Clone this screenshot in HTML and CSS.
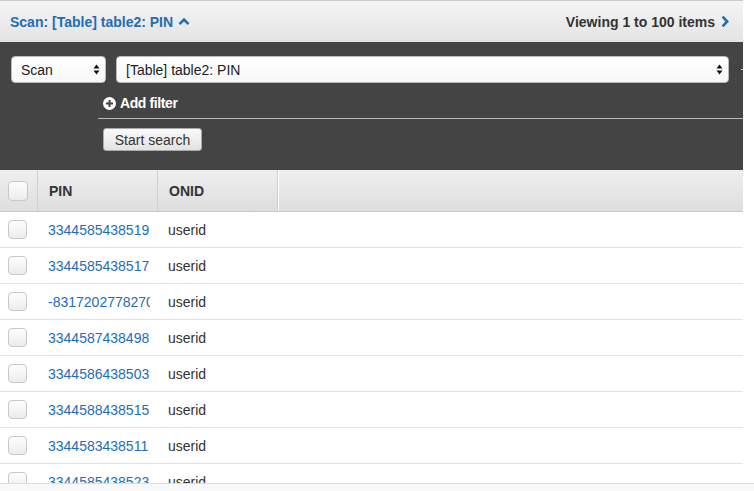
FILE: index.html
```html
<!DOCTYPE html>
<html>
<head>
<meta charset="utf-8">
<link rel="stylesheet" href="styles.css">
</head>
<body>
<div class="page">
  <div class="topbar">
    <a class="title">Scan: [Table] table2: PIN
      <svg class="chev-up" width="12" height="9" viewBox="0 0 12 9"><path d="M1.5 7.2 L6 2.7 L10.5 7.2" fill="none" stroke="#1f6db5" stroke-width="2.6"/></svg>
    </a>
    <div class="viewing">Viewing 1 to 100 items
      <svg class="chev-right" width="8" height="13" viewBox="0 0 8 13"><path d="M1.6 1.6 L6.2 6.5 L1.6 11.4" fill="none" stroke="#1f6db5" stroke-width="2.6"/></svg>
    </div>
  </div>

  <div class="panel">
    <div class="selects">
      <div class="select select-scan"><span>Scan</span><span class="arrows"><svg width="7" height="11" viewBox="0 0 7 11"><path d="M3.5 0.5 L6.5 4.5 L0.5 4.5 Z M3.5 10.5 L6.5 6.5 L0.5 6.5 Z" fill="#111"/></svg></span></div>
      <div class="select select-table"><span>[Table] table2: PIN</span><span class="arrows"><svg width="7" height="11" viewBox="0 0 7 11"><path d="M3.5 0.5 L6.5 4.5 L0.5 4.5 Z M3.5 10.5 L6.5 6.5 L0.5 6.5 Z" fill="#111"/></svg></span></div>
      <span class="tick"></span>
    </div>
    <div class="filter">
      <div class="add-filter">
        <svg width="13" height="13" viewBox="0 0 13 13"><circle cx="6.5" cy="6.5" r="6.5" fill="#fff"/><path d="M6.5 3 V10 M3 6.5 H10" stroke="#444" stroke-width="2"/></svg>
        <span>Add filter</span>
      </div>
    </div>
    <div class="actions">
      <button class="btn">Start search</button>
    </div>
  </div>

  <div class="table">
    <div class="thead">
      <div class="th th-check"><span class="cb"></span></div>
      <div class="th">PIN</div>
      <div class="th">ONID</div>
      <div class="th th-rest"></div>
    </div>
    <div class="row"><div class="td td-check"><span class="cb"></span></div><div class="td pin">3344585438519</div><div class="td onid">userid</div><div class="td"></div></div>
    <div class="row"><div class="td td-check"><span class="cb"></span></div><div class="td pin">3344585438517</div><div class="td onid">userid</div><div class="td"></div></div>
    <div class="row"><div class="td td-check"><span class="cb"></span></div><div class="td pin">-8317202778270</div><div class="td onid">userid</div><div class="td"></div></div>
    <div class="row"><div class="td td-check"><span class="cb"></span></div><div class="td pin">3344587438498</div><div class="td onid">userid</div><div class="td"></div></div>
    <div class="row"><div class="td td-check"><span class="cb"></span></div><div class="td pin">3344586438503</div><div class="td onid">userid</div><div class="td"></div></div>
    <div class="row"><div class="td td-check"><span class="cb"></span></div><div class="td pin">3344588438515</div><div class="td onid">userid</div><div class="td"></div></div>
    <div class="row"><div class="td td-check"><span class="cb"></span></div><div class="td pin">3344583438511</div><div class="td onid">userid</div><div class="td"></div></div>
    <div class="row"><div class="td td-check"><span class="cb"></span></div><div class="td pin">3344585438523</div><div class="td onid">userid</div><div class="td"></div></div>
  </div>
</div>
<div class="bottom-bar"></div>
</body>
</html>
```

FILE: styles.css
```css
* { box-sizing: border-box; }
html, body { margin: 0; padding: 0; background: #fff; overflow: hidden; }
body {
  font-family: "Liberation Sans", Arial, Helvetica, sans-serif;
  height: 491px;
}
.page { width: 743px; }

.topbar {
  height: 42px;
  border-top: 1px solid #c9c9c9;
  background: linear-gradient(#f5f5f5, #e3e3e3);
  display: flex;
  align-items: center;
  justify-content: space-between;
  padding: 0 14px 0 10px;
}
.title {
  color: #1f6db5;
  font-weight: bold;
  font-size: 14px;
  display: flex;
  align-items: center;
  gap: 5px;
}
.viewing {
  color: #333;
  font-weight: bold;
  font-size: 14px;
  display: flex;
  align-items: center;
  gap: 6px;
}

.panel {
  background: #444;
  height: 128px;
  padding-top: 14px;
}
.selects {
  display: flex;
  align-items: center;
  height: 27px;
}
.select {
  height: 27px;
  background: linear-gradient(#fff, #f7f7f7);
  border-radius: 4px;
  border: 1px solid #bbb;
  display: flex;
  align-items: center;
  justify-content: space-between;
  font-size: 14px;
  color: #222;
}
.select-scan { margin-left: 11px; width: 95px; padding: 0 5px 0 9px; }
.select-table { margin-left: 10px; width: 613px; padding: 0 5px 0 9px; }
.arrows { display: flex; align-items: center; }
.tick { margin-left: 12px; width: 2px; height: 1px; background: #ccc; }

.filter {
  margin-left: 98px;
  border-bottom: 1px solid #bbb;
  height: 36px;
  padding-top: 12px;
}
.add-filter {
  margin-left: 5px;
  display: flex;
  align-items: center;
  gap: 4px;
  color: #fff;
  font-size: 14px;
  font-weight: bold;
  letter-spacing: -0.4px;
}
.actions { padding: 9px 0 0 103px; }
.btn {
  font-family: "Liberation Sans", Arial, sans-serif;
  font-size: 14px;
  color: #333;
  height: 23px;
  width: 99px;
  padding: 0;
  border: 1px solid #aaa;
  border-radius: 3px;
  background: linear-gradient(#fafafa, #e2e2e2);
}

.thead {
  display: grid;
  grid-template-columns: 38px 120px 120px 1fr;
  height: 42px;
  background: linear-gradient(#efefef, #dedede);
  border-bottom: 1px solid #c8c8c8;
}
.th {
  display: flex;
  align-items: center;
  padding-left: 11px;
  font-size: 14px;
  font-weight: bold;
  color: #333;
  border-right: 1px solid #cfcfcf;
}
.th-check { padding-left: 8px; }
.th-rest { border-right: none; border-left: 1px solid #fff; }
.cb {
  display: block;
  width: 20px;
  height: 20px;
  border: 1px solid #c8c8c8;
  border-radius: 4px;
  background: linear-gradient(#fdfdfd, #ececec);
}
.row {
  display: grid;
  grid-template-columns: 38px 120px 120px 1fr;
  height: 36px;
  border-bottom: 1px solid #e1e1e1;
}
.td {
  display: flex;
  align-items: center;
  font-size: 14px;
  color: #333;
  overflow: hidden;
  white-space: nowrap;
}
.td-check { padding-left: 8px; }
.td-check .cb { width: 19px; height: 19px; }
.pin { color: #1f6db5; padding-left: 10px; padding-right: 8px; }
.pin { clip-path: inset(0 8px 0 0); }
.onid { padding-left: 10px; }

.bottom-bar {
  position: absolute;
  left: 0;
  top: 483px;
  width: 754px;
  height: 8px;
  background: #f9f9f9;
  border-top: 1px solid #ddd;
}
```
